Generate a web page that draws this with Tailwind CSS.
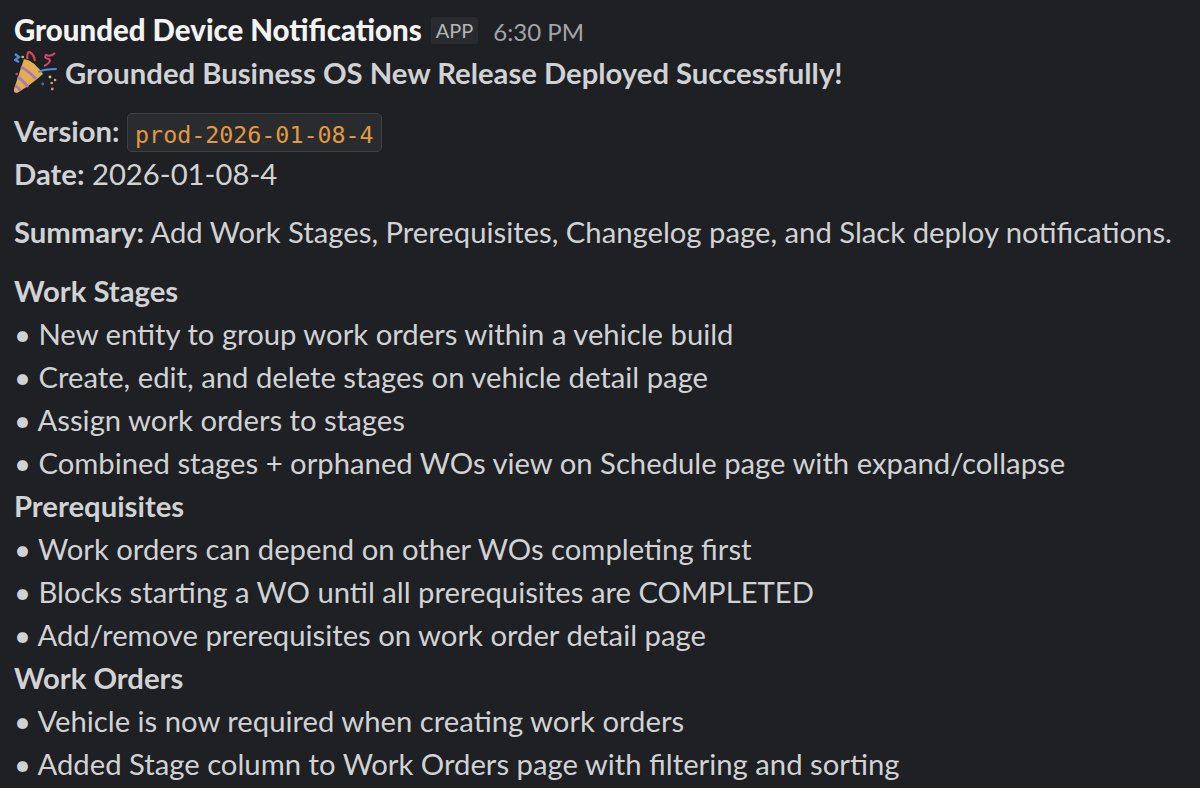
<!DOCTYPE html>
<html lang="en">
<head>
    <meta charset="UTF-8">
    <title>Grounded Device Notifications</title>
    <script src="https://cdn.jsdelivr.net/npm/@tailwindcss/browser@4"></script>
</head>
<body class="bg-[#1f2024] h-[788px] overflow-hidden font-['Lato',sans-serif] text-[#d1d2d3] text-[29.250px] leading-[43px]">
    <div class="pl-[14px] pt-[8px]">
        <div class="flex items-baseline h-[43px]">
            <span class="font-black text-[29.450px] text-[#f3f3f3]">Grounded Device Notifications</span>
            <span class="ml-[9px] px-[5px] h-[27px] -translate-y-[3px] bg-[#2a2b2f] rounded-[3px] text-[20px] leading-[27px] text-[#b5b6b8]">APP</span>
            <span class="ml-[15px] text-[24px] text-[#a4a5a7]">6:30 PM</span>
        </div>
        <div class="flex items-center h-[43px] font-bold">
            <svg class="w-[44px] h-[44px] mr-[7px] shrink-0" viewBox="0 0 44 44">
                <path d="M10 8 Q20 10 29 23 Q18 33 3 42 Q-1 42 0 38 Z" fill="#e2b04a"/>
                <path d="M10 8 Q20 10 29 23 Q24 14 12 9 Z" fill="#f0d070"/>
                <path d="M7 16 Q15 20 22 28" fill="none" stroke="#a974cc" stroke-width="2.800"/>
                <path d="M3.500 26 Q9 29 14 36" fill="none" stroke="#a974cc" stroke-width="2.800"/>
                <path d="M1 34.500 Q4 36 6.700 40" fill="none" stroke="#a974cc" stroke-width="2.500"/>
                <path d="M1 3 L5 6 L1 9 L5 11" fill="none" stroke="#4a8fe0" stroke-width="2.200"/>
                <path d="M13.300 8 Q13 1 15.300 1 Q20 3 21 10" fill="none" stroke="#d5455e" stroke-width="2.200"/>
                <path d="M30 15 Q38 11 35 8 Q29 7 32 4 Q37 6 41 2" fill="none" stroke="#d5456e" stroke-width="2"/>
                <path d="M24.300 21 Q30 18 42.700 18" fill="none" stroke="#4a8fe0" stroke-width="2.200"/>
                <circle cx="8.700" cy="6" r="1.300" fill="#e8c64a"/>
                <circle cx="2.700" cy="23" r="1.300" fill="#c0504a"/>
                <circle cx="36" cy="26" r="1.400" fill="#e8c64a"/>
                <circle cx="41" cy="29" r="1.300" fill="#d8a070"/>
                <circle cx="37.700" cy="32" r="1.300" fill="#d8a070"/>
                <circle cx="38.300" cy="38" r="1.400" fill="#d89080"/>
                <circle cx="28.700" cy="33" r="1.400" fill="#3d6fd0"/>
            </svg>
            <span>Grounded Business OS New Release Deployed Successfully!</span>
        </div>
        <div class="mt-[15px]">
            <div class="h-[43px] flex items-baseline">
                <b>Version:</b>
                <code class="ml-[7.500px] px-[7px] h-[39px] translate-y-[1px] bg-[#2a2b2f] border border-[#3f4044] rounded-[5px] font-['DejaVu_Sans_Mono',monospace] text-[23.300px] leading-[41px] text-[#e09a40]">prod-2026-01-08-4</code>
            </div>
            <div><b>Date:</b> 2026-01-08-4</div>
        </div>
        <div class="mt-[15px]"><b>Summary:</b> Add Work Stages, Prerequisites, Changelog page, and Slack deploy notifications.</div>
        <div class="mt-[16px]">
            <div class="font-bold">Work Stages</div>
            <div>• New entity to group work orders within a vehicle build</div>
            <div>• Create, edit, and delete stages on vehicle detail page</div>
            <div>• Assign work orders to stages</div>
            <div>• Combined stages + orphaned WOs view on Schedule page with expand/collapse</div>
            <div class="font-bold">Prerequisites</div>
            <div>• Work orders can depend on other WOs completing first</div>
            <div>• Blocks starting a WO until all prerequisites are COMPLETED</div>
            <div>• Add/remove prerequisites on work order detail page</div>
            <div class="font-bold">Work Orders</div>
            <div>• Vehicle is now required when creating work orders</div>
            <div>• Added Stage column to Work Orders page with filtering and sorting</div>
        </div>
    </div>
</body>
</html>
